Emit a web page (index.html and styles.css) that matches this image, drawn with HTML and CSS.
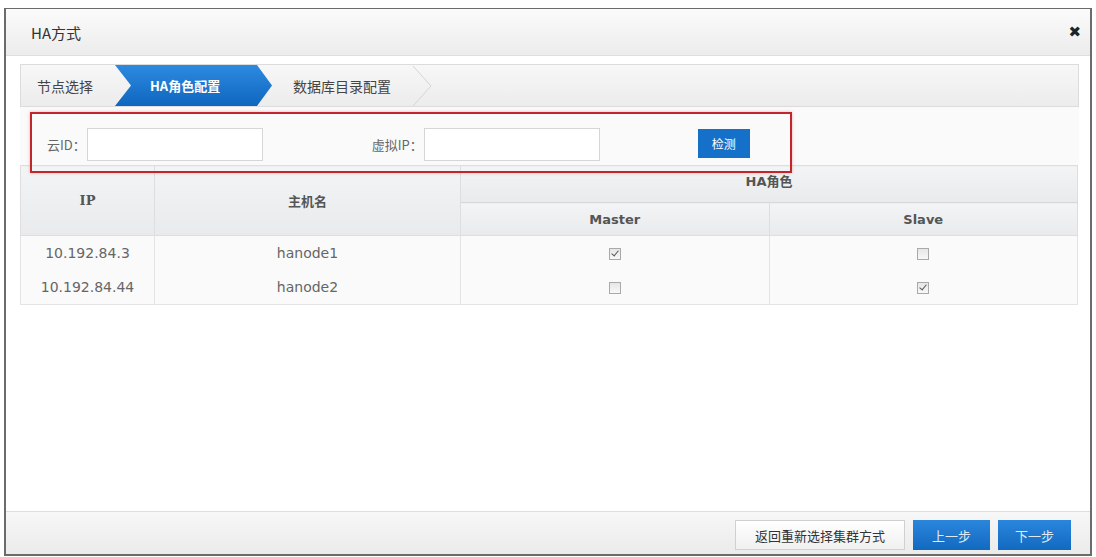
FILE: index.html
```html
<!DOCTYPE html>
<html lang="zh-CN">
<head>
    <meta charset="UTF-8">
    <title>HA方式</title>
    <link rel="stylesheet" href="styles.css">
</head>
<body>
    <div class="dialog">
        <div class="dialog-header">
            <span class="title">HA方式</span>
            <span class="close">&#10006;</span>
        </div>
        <div class="dialog-body">
            <div class="steps">
                <div class="step">节点选择</div>
                <div class="step active">HA角色配置</div>
                <div class="step">数据库目录配置</div>
                <svg class="step-sep" width="22" height="40" viewBox="0 0 22 40">
                    <polyline points="2,0 20,20 2,40" fill="none" stroke="#d4d4d4" stroke-width="1"/>
                </svg>
            </div>
            <div class="form-row">
                <label class="label">云ID：</label>
                <input class="field" type="text">
                <label class="label label-ip">虚拟IP：</label>
                <input class="field" type="text">
                <button class="btn-check">检测</button>
            </div>
            <table class="role-table">
                <thead>
                    <tr>
                        <th rowspan="2" class="col-ip serif">IP</th>
                        <th rowspan="2" class="col-host">主机名</th>
                        <th colspan="2" class="group">HA角色</th>
                    </tr>
                    <tr class="sub">
                        <th class="col-role">Master</th>
                        <th>Slave</th>
                    </tr>
                </thead>
                <tbody>
                    <tr>
                        <td>10.192.84.3</td>
                        <td>hanode1</td>
                        <td><span class="cb checked"></span></td>
                        <td><span class="cb"></span></td>
                    </tr>
                    <tr>
                        <td>10.192.84.44</td>
                        <td>hanode2</td>
                        <td><span class="cb"></span></td>
                        <td><span class="cb checked"></span></td>
                    </tr>
                </tbody>
            </table>
            <div class="highlight"></div>
        </div>
        <div class="dialog-footer">
            <button class="btn btn-plain">返回重新选择集群方式</button>
            <button class="btn btn-blue">上一步</button>
            <button class="btn btn-blue">下一步</button>
        </div>
    </div>
</body>
</html>
```

FILE: styles.css
```css
body {
    margin: 0;
    background: #fff;
    font-family: "DejaVu Sans", "Noto Sans CJK SC", sans-serif;
    color: #555;
}

.dialog {
    box-sizing: border-box;
    width: 1088px;
    height: 548px;
    margin: 8px 0 0 4px;
    border: 2px solid #6b6b6b;
    border-top-width: 1px;
    display: flex;
    flex-direction: column;
    background: #fff;
}

.dialog-header {
    box-sizing: border-box;
    height: 47px;
    flex: none;
    display: flex;
    align-items: center;
    justify-content: space-between;
    padding: 0 9px 0 25px;
    background: linear-gradient(#fbfbfb, #ececec);
    border-bottom: 1px solid #dedede;
}

.title {
    font-family: "Noto Sans CJK SC", sans-serif;
    font-size: 15px;
    color: #333;
}

.close {
    font-size: 15px;
    color: #222;
    font-weight: bold;
}

.dialog-body {
    flex: 1;
    position: relative;
    padding: 8px 11px 0 14px;
}

.steps {
    box-sizing: border-box;
    height: 43px;
    display: flex;
    align-items: center;
    border: 1px solid #dcdcdc;
    background: linear-gradient(#f7f7f7, #ececec);
    font-family: "Noto Sans CJK SC", sans-serif;
    font-size: 14px;
    color: #444;
}

.step {
    height: 41px;
    display: flex;
    align-items: center;
}

.step:first-child {
    padding-left: 16px;
    width: 78px;
}

.step.active {
    width: 157px;
    padding-left: 35px;
    box-sizing: border-box;
    background: linear-gradient(#2d8ae0, #0f66be);
    color: #fff;
    font-size: 13px;
    font-weight: bold;
    clip-path: polygon(0 0, 142px 0, 157px 50%, 142px 100%, 0 100%, 16px 50%);
}

.step:nth-child(3) {
    padding-left: 21px;
}

.step-sep {
    margin-left: 20px;
}

.form-row {
    height: 58px;
    box-sizing: border-box;
    padding: 21px 0 0 27px;
    display: flex;
    align-items: flex-start;
    font-family: "Noto Sans CJK SC", sans-serif;
    font-size: 13px;
    background: #fafafa;
}

.label {
    line-height: 33px;
    color: #666;
}

.label-ip {
    margin-left: 109px;
}

.field {
    box-sizing: border-box;
    width: 176px;
    height: 33px;
    border: 1px solid #d6d6d6;
    background: #fff;
    margin: 0 0 0 1px;
}

.btn-check {
    margin: 1px 0 0 98px;
    width: 52px;
    height: 29px;
    border: none;
    background: #1470c8;
    color: #fff;
    font-family: "Noto Sans CJK SC", sans-serif;
    font-size: 12px;
}

.role-table {
    width: 1058px;
    border-collapse: collapse;
    table-layout: fixed;
    font-size: 14px;
}

.role-table th {
    background: linear-gradient(#f3f4f5, #e8eaec);
    border: 1px solid #dcdee0;
    color: #555;
    font-size: 13px;
    font-family: "DejaVu Sans", "Noto Sans CJK SC", sans-serif;
    font-weight: bold;
    padding: 0;
}

.role-table th.serif {
    font-family: "DejaVu Serif", serif;
}

.role-table th.group {
    height: 37px;
    vertical-align: top;
    padding-top: 5px;
    box-sizing: border-box;
    border-bottom-color: #d6d8da;
}

.role-table tr.sub th {
    height: 32px;
}

.col-ip { width: 133px; }
.col-host { width: 305px; }
.col-role { width: 309px; }

.role-table td {
    height: 34px;
    text-align: center;
    border-left: 1px solid #e4e4e4;
    border-right: 1px solid #e4e4e4;
    background: #fafafa;
    color: #666;
    padding: 0;
}

.role-table tbody tr:last-child td {
    border-bottom: 1px solid #e4e4e4;
}

.cb {
    display: inline-block;
    width: 10px;
    height: 10px;
    border: 1px solid #a9a9a9;
    background: linear-gradient(#e6e6e6, #f8f8f8);
    vertical-align: middle;
    position: relative;
}

.cb.checked::after {
    content: "";
    position: absolute;
    left: 3px;
    top: 0;
    width: 3px;
    height: 6px;
    border: solid #555;
    border-width: 0 1.5px 1.5px 0;
    transform: rotate(40deg);
}

.highlight {
    position: absolute;
    left: 24px;
    top: 56px;
    width: 762px;
    height: 61px;
    box-sizing: border-box;
    border: 2px solid #c0262c;
    box-shadow: 0 0 3px rgba(200, 80, 80, 0.4);
}

.dialog-footer {
    height: 42px;
    flex: none;
    display: flex;
    align-items: center;
    justify-content: flex-end;
    gap: 8px;
    padding-right: 19px;
    border-top: 1px solid #dedede;
    background: linear-gradient(#f7f7f7, #ebebeb);
}

.btn {
    height: 30px;
    font-family: "Noto Sans CJK SC", sans-serif;
    font-size: 13px;
    margin-top: 4px;
}

.btn-plain {
    width: 170px;
    border: 1px solid #d0d0d0;
    background: linear-gradient(#fff, #f0f0f0);
    color: #333;
}

.btn-blue {
    width: 77px;
    border: none;
    background: linear-gradient(#2a86dc, #1269c0);
    color: #dfe9f5;
}

.btn-blue:last-child {
    width: 73px;
}
```
